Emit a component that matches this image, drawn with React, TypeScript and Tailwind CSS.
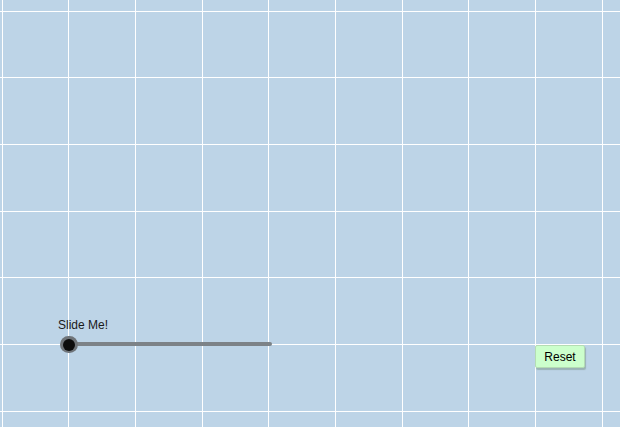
import React, { useState } from "react";

const W = 620;
const H = 427;
const STEP = 66.67;

const xs = Array.from({ length: 10 }, (_, i) => Math.round(2 + i * STEP - 0.2));
const ys = Array.from({ length: 7 }, (_, i) => Math.round(11 + i * STEP - 0.2));

const Grid: React.FC = () => (
  <svg className="absolute inset-0" width={W} height={H} shapeRendering="crispEdges">
    {xs.map((x) => (
      <line key={"v" + x} x1={x + 0.5} y1={0} x2={x + 0.5} y2={H} stroke="#ffffff" strokeWidth={1} />
    ))}
    {ys.map((y) => (
      <line key={"h" + y} x1={0} y1={y + 0.5} x2={W} y2={y + 0.5} stroke="#ffffff" strokeWidth={1} />
    ))}
  </svg>
);

export default function App() {
  const [value, setValue] = useState(0);

  return (
    <div
      className="relative w-[620px] h-[427px] overflow-hidden bg-[#bdd4e7] select-none"
      style={{ fontFamily: '"Liberation Sans", Arial, sans-serif' }}
    >
      <Grid />

      {/* slider */}
      <div className="absolute left-[58px] top-[318px] text-[12px] leading-[14px] text-[#1a1a1a]">
        Slide Me!
      </div>
      <div className="absolute left-[69px] top-[342px] w-[203px] h-[4px] rounded-full bg-[#7c8287]" />
      <button
        onClick={() => setValue(value)}
        className="absolute left-[60px] top-[336px] w-[18px] h-[17px] rounded-full bg-[#6f7479] flex items-center justify-center"
      >
        <span className="block w-[12px] h-[12px] rounded-full bg-[#0d0d0d]" />
      </button>

      {/* reset button */}
      <button
        onClick={() => setValue(0)}
        className="absolute left-[535px] top-[345px] w-[50px] h-[23px] rounded-[2px] border border-[#b4dcb4] bg-[#ccffcc] text-[12px] leading-[14px] text-black shadow-[1px_2px_1px_rgba(110,140,120,0.45)] flex items-center justify-center pt-[1px]"
      >
        Reset
      </button>
    </div>
  );
}
